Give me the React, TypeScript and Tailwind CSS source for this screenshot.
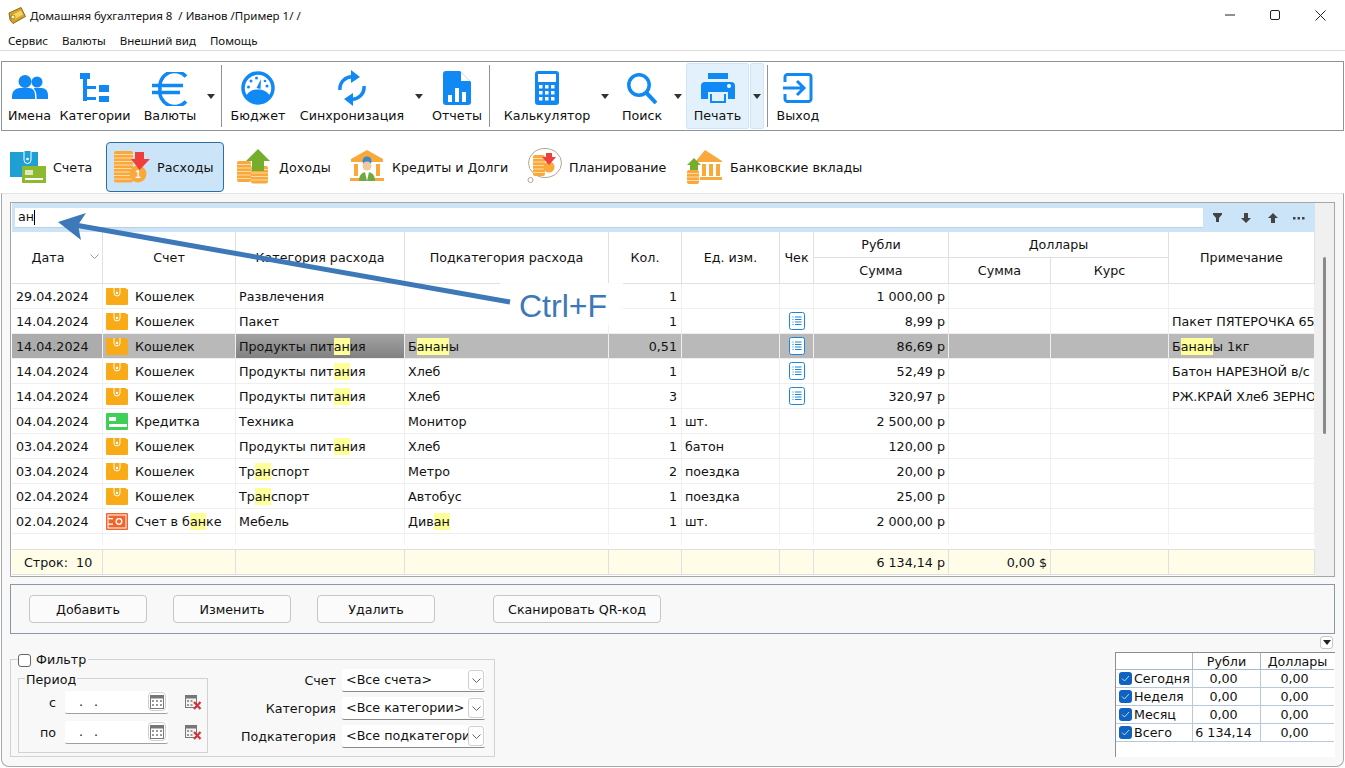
import React from "react";

const B = "#1089f5";
const cols = "grid grid-cols-[91px_133px_169px_204px_73px_98px_34px_135px_102px_118px_146px]";

function Hl({ t }: { t: string }) {
  const parts = t.split(/(ан)/g);
  const out: React.ReactNode[] = [];
  parts.forEach((p, i) => {
    if (p === "ан") out.push(<span key={i} className="bg-[#ffff99] inline-block leading-[17px]">{p}</span>);
    else if (p) out.push(<span key={i}>{p}</span>);
  });
  return <>{out}</>;
}

const IUsers = () => (
  <svg width="37" height="24" viewBox="0 0 37 24" fill={B} className="mb-[3px]">
    <circle cx="14" cy="6.500" r="6.500" /><circle cx="26" cy="7" r="5.500" />
    <path d="M1 24v-3c0-5 4-8 8-8h9c4 0 6 3 6 8v3z" />
    <path d="M25.500 24v-3c0-3-1-6-3-7.500 1-.5 2-.5 3-.5h5c4 0 6.500 3 6.500 7v4z" />
  </svg>
);
const ITree = () => (
  <svg width="30" height="30" viewBox="0 0 30 30" fill={B}>
    <rect x="0" y="0" width="10" height="6" /><rect x="3" y="6" width="4" height="22" />
    <rect x="3" y="13" width="13" height="3" /><rect x="3" y="24" width="13" height="3" />
    <rect x="19" y="12" width="10" height="7" /><rect x="19" y="23" width="10" height="6" />
  </svg>
);
const IEuro = () => (
  <svg width="36" height="34" viewBox="0 0 36 34" fill="none" stroke={B} strokeWidth="3.500" className="mt-[2px]">
    <path d="M34 4.500A15 15 0 0 0 8 17a15 15 0 0 0 26 12.500" />
    <path d="M0 13.500h31M0 20.500h28" />
  </svg>
);
const IGauge = () => (
  <svg width="34" height="34" viewBox="0 0 34 34">
    <circle cx="17" cy="17" r="15" fill="none" stroke={B} strokeWidth="3.500" />
    <path d="M5 25c3-5 7-6.500 12-6.500S26 20 29 25c-3 4-7 6-12 6S8 29 5 25z" fill={B} />
    <path d="M15.500 17L20 8l-.5 10z" fill={B} />
    <g fill={B}><circle cx="7.500" cy="16" r="1.500" /><circle cx="10" cy="10" r="1.500" /><circle cx="15.500" cy="7" r="1.500" /><circle cx="26" cy="15" r="1.500" /><circle cx="24" cy="10" r="1.300" /></g>
  </svg>
);
const ISync = () => (
  <svg width="28" height="36" viewBox="0 0 28 36" fill="none" stroke={B} strokeWidth="3.500">
    <path d="M2 20A12 12 0 0 1 16 7" /><path d="M26 16A12 12 0 0 1 12 29" />
    <path d="M13 0l9 7-9 6z" fill={B} stroke="none" /><path d="M15 23l-9 6 9 7z" fill={B} stroke="none" />
  </svg>
);
const IReport = () => (
  <svg width="28" height="34" viewBox="0 0 28 34">
    <path d="M3 0h14l11 11v20a3 3 0 0 1-3 3H3a3 3 0 0 1-3-3V3a3 3 0 0 1 3-3z" fill={B} />
    <path d="M18 1l9 9h-9z" fill="#fff" />
    <g fill="#fff"><rect x="5" y="24" width="4" height="7" /><rect x="12" y="17" width="4" height="14" /><rect x="19" y="21" width="4" height="10" /></g>
  </svg>
);
const ICalc = () => (
  <svg width="24" height="34" viewBox="0 0 24 34">
    <rect width="24" height="34" rx="3" fill={B} />
    <rect x="3" y="3" width="18" height="8" fill="#fff" />
    <g fill="#fff">
      <rect x="4" y="14" width="3.500" height="3.500" /><rect x="10" y="14" width="3.500" height="3.500" /><rect x="16" y="14" width="3.500" height="3.500" />
      <rect x="4" y="20" width="3.500" height="3.500" /><rect x="10" y="20" width="3.500" height="3.500" /><rect x="16" y="20" width="3.500" height="3.500" />
      <rect x="4" y="26" width="3.500" height="3.500" /><rect x="10" y="26" width="3.500" height="3.500" /><rect x="16" y="26" width="3.500" height="3.500" />
    </g>
  </svg>
);
const ISearch = () => (
  <svg width="30" height="31" viewBox="0 0 30 31" fill="none" stroke={B}>
    <circle cx="12" cy="12" r="10.200" strokeWidth="3.500" /><path d="M19.500 20l9.500 10" strokeWidth="4" />
  </svg>
);
const IPrint = () => (
  <svg width="34" height="30" viewBox="0 0 34 30">
    <rect x="7" y="0" width="20" height="6" fill={B} />
    <path d="M4 9h26a4 4 0 0 1 4 4v13h-7v-7H7v7H0V13a4 4 0 0 1 4-4z" fill={B} />
    <rect x="9" y="21" width="16" height="9" fill={B} /><rect x="11" y="21" width="12" height="7" fill="#e3f1fc" />
    <circle cx="28" cy="13" r="2" fill="#fff" />
  </svg>
);
const IExit = () => (
  <svg width="30" height="30" viewBox="0 0 30 30" fill="none" stroke={B} strokeWidth="3">
    <path d="M2 9V4a2.500 2.500 0 0 1 2.500-2.500h21A2.500 2.500 0 0 1 28 4v22a2.500 2.500 0 0 1-2.500 2.500h-21A2.500 2.500 0 0 1 2 26v-5" />
    <path d="M0 15h20M14 8l7 7-7 7" />
  </svg>
);
const Drop = () => (
  <svg width="8" height="5" viewBox="0 0 8 5" className="block"><path d="M0 0h8L4 5z" fill="#333" /></svg>
);

function Tool({ w, label, icon }: { w: string; label: string; icon: React.ReactNode }) {
  return (
    <div className={`${w} shrink-0 flex flex-col items-center pt-[8px]`}>
      <div className="h-[36px] flex items-center justify-center">{icon}</div>
      <div className="mt-[1px] leading-[17px] text-[12.7px] text-[#111] whitespace-nowrap">{label}</div>
    </div>
  );
}
const ArrowBtn = ({ c }: { c: string }) => <div className={`${c} w-[8px] shrink-0 pt-[32px]`}><Drop /></div>;
const Sep = ({ c }: { c: string }) => <div className={`${c} w-[1px] my-[3px] bg-[#8d959c] shrink-0`} />;

const Coins = ({ x, y, w, n }: { x: number; y: number; w: number; n: number }) => (
  <g>
    <rect x={x} y={y} width={w} height={n * 3.500} rx="2" fill="#f9a83c" />
    {Array.from({ length: n - 1 }, (_, i) => (
      <rect key={i} x={x} y={y + 3 + i * 3.500} width={w} height="1" fill="#ffdca8" />
    ))}
  </g>
);
const TAcc = () => (
  <svg width="36" height="32" viewBox="0 0 36 32">
    <path d="M0 1h28v25H0z" fill="#1ea0d5" />
    <path d="M14 0v9a3.500 3.500 0 0 0 7 0V0" fill="#1ea0d5" stroke="#fff" strokeWidth="1" />
    <circle cx="17.500" cy="8" r="1.300" fill="#fff" />
    <rect x="12" y="15" width="24" height="17" fill="#8db82f" />
    <rect x="15" y="19" width="8" height="5" fill="#fff" opacity=".7" /><rect x="15" y="27" width="18" height="2" fill="#fff" />
  </svg>
);
const TExp = () => (
  <svg width="36" height="32" viewBox="0 0 36 32">
    <Coins x={0} y={0} w={19} n={9} />
    <circle cx="24" cy="23" r="8.500" fill="#f9a83c" />
    <text x="24" y="27" fontSize="10" fill="#fff" textAnchor="middle" fontFamily="Liberation Sans, sans-serif" fontWeight="700">1</text>
    <path d="M21 1h9v7h6L25.500 19 17 8h4z" fill="#ef3e3e" />
  </svg>
);
const TInc = () => (
  <svg width="34" height="36" viewBox="0 0 34 36">
    <Coins x={0} y={12} w={14} n={6} /><Coins x={14} y={17} w={17} n={5} />
    <path d="M21 0l12 12h-6v10H15V12H9z" fill="#76ad2b" />
  </svg>
);
const TBank = () => (
  <svg width="36" height="34" viewBox="0 0 36 34">
    <path d="M18 0l16 9v3H2V9z" fill="#f9a83c" />
    <rect x="5" y="14" width="4" height="12" fill="#f9a83c" /><rect x="27" y="14" width="4" height="12" fill="#f9a83c" />
    <rect x="1" y="28" width="34" height="3" fill="#f9a83c" />
    <circle cx="18" cy="11" r="4.500" fill="#3a8bc8" /><circle cx="18" cy="16" r="4.500" fill="#efc9a0" />
    <path d="M10 31c0-6 3-9 8-9s8 3 8 9z" fill="#6fa942" /><path d="M16 22h4l-2 9z" fill="#fff" />
  </svg>
);
const TPlan = () => (
  <svg width="36" height="38" viewBox="0 0 36 38">
    <ellipse cx="19" cy="15" rx="16.500" ry="14.500" fill="#fff" stroke="#b5a68c" strokeWidth="1" />
    <circle cx="4.500" cy="32" r="2.500" fill="#fff" stroke="#b5a68c" />
    <Coins x={7} y={7} w={12} n={6} />
    <circle cx="23" cy="19" r="5.500" fill="#f9a83c" />
    <path d="M20 5h6v4h4l-7 8-7-8h4z" fill="#ef3e3e" />
  </svg>
);
const TDep = () => (
  <svg width="36" height="34" viewBox="0 0 36 34">
    <path d="M18 0L35 11v1H9v-1z" fill="#f9a83c" />
    <rect x="15" y="14" width="4" height="12" fill="#f9a83c" /><rect x="22" y="14" width="4" height="12" fill="#f9a83c" /><rect x="29" y="14" width="4" height="12" fill="#f9a83c" />
    <rect x="13" y="27" width="22" height="3" fill="#f9a83c" />
    <Coins x={0} y={20} w={12} n={4} />
    <path d="M7 8l7 7h-3v5H3v-5H0z" fill="#76ad2b" />
  </svg>
);

function Tab({ c, icon, label }: { c: string; icon: React.ReactNode; label: string }) {
  return (
    <div className={`${c} h-[50px] shrink-0 flex items-center`}>
      <div className="w-[36px] flex justify-center">{icon}</div>
      <span className="ml-[7px] pt-[1px] text-[12.7px] text-[#111] whitespace-nowrap">{label}</span>
    </div>
  );
}

const Wallet = () => (
  <svg width="22" height="17" viewBox="0 0 22 17" className="shrink-0 -mt-[1px]">
    <rect x="0" y="1" width="22" height="16" rx="1" fill="#f9ab17" />
    <rect x="0" y="0" width="20" height="1" fill="#f9ab17" />
    <path d="M8 0v5a3 3 0 0 0 6 0V0" fill="#f9ab17" stroke="#fff" strokeWidth="1" />
    <circle cx="11" cy="5" r="1.200" fill="#fff" />
  </svg>
);
const CardI = () => (
  <svg width="22" height="17" viewBox="0 0 22 17" className="shrink-0 -mt-[1px]">
    <rect width="22" height="17" rx="1" fill="#3ecf57" />
    <rect x="3" y="4" width="7" height="4" fill="#fff" /><rect x="3" y="11" width="18" height="3" fill="#fff" />
  </svg>
);
const BankI = () => (
  <svg width="22" height="17" viewBox="0 0 22 17" className="shrink-0 -mt-[1px]">
    <rect width="22" height="17" rx="1" fill="#f0652a" />
    <rect x="2" y="2" width="18" height="13" fill="none" stroke="#fff" strokeWidth="1" />
    <circle cx="13" cy="8.500" r="2.800" fill="none" stroke="#fff" strokeWidth="1.300" />
    <rect x="2" y="5" width="5" height="1.300" fill="#fff" /><rect x="2" y="10.500" width="5" height="1.300" fill="#fff" />
  </svg>
);
const Receipt = () => (
  <svg width="16" height="18" viewBox="0 0 16 18" fill="none" stroke="#1a86d9" className="-mt-[1px]">
    <rect x=".5" y=".5" width="15" height="17" rx="2" fill="#fff" />
    <path d="M6 5h6.500M6 7.500h6.500M6 10h6.500M6 12.500h6.500" /><path d="M3.500 5h1M3.500 7.500h1M3.500 10h1M3.500 12.500h1" />
  </svg>
);

type Row = { d: string; a: 0 | 1 | 2; an: string; c: string; s: string; q: string; u: string; r: boolean; sum: string; n: string; sel?: boolean };
const rows: Row[] = [
  { d: "29.04.2024", a: 0, an: "Кошелек", c: "Развлечения", s: "", q: "1", u: "", r: false, sum: "1 000,00 р", n: "" },
  { d: "14.04.2024", a: 0, an: "Кошелек", c: "Пакет", s: "", q: "1", u: "", r: true, sum: "8,99 р", n: "Пакет ПЯТЕРОЧКА 65" },
  { d: "14.04.2024", a: 0, an: "Кошелек", c: "Продукты питания", s: "Бананы", q: "0,51", u: "", r: true, sum: "86,69 р", n: "Бананы 1кг", sel: true },
  { d: "14.04.2024", a: 0, an: "Кошелек", c: "Продукты питания", s: "Хлеб", q: "1", u: "", r: true, sum: "52,49 р", n: "Батон НАРЕЗНОЙ в/с" },
  { d: "14.04.2024", a: 0, an: "Кошелек", c: "Продукты питания", s: "Хлеб", q: "3", u: "", r: true, sum: "320,97 р", n: "РЖ.КРАЙ Хлеб ЗЕРНО" },
  { d: "04.04.2024", a: 1, an: "Кредитка", c: "Техника", s: "Монитор", q: "1", u: "шт.", r: false, sum: "2 500,00 р", n: "" },
  { d: "03.04.2024", a: 0, an: "Кошелек", c: "Продукты питания", s: "Хлеб", q: "1", u: "батон", r: false, sum: "120,00 р", n: "" },
  { d: "03.04.2024", a: 0, an: "Кошелек", c: "Транспорт", s: "Метро", q: "2", u: "поездка", r: false, sum: "20,00 р", n: "" },
  { d: "02.04.2024", a: 0, an: "Кошелек", c: "Транспорт", s: "Автобус", q: "1", u: "поездка", r: false, sum: "25,00 р", n: "" },
  { d: "02.04.2024", a: 2, an: "Счет в банке", c: "Мебель", s: "Диван", q: "1", u: "шт.", r: false, sum: "2 000,00 р", n: "" },
];

const Hd = ({ c = "", t }: { c?: string; t: string }) => (
  <div className={`${c} flex items-center justify-center pt-[1px] border-r border-b border-[#e0e0e0] whitespace-nowrap`}>{t}</div>
);

function DataRow({ r }: { r: Row }) {
  const base = "h-[25px] pt-[1px] border-r border-b border-[#efefef] flex items-center overflow-hidden whitespace-nowrap";
  const sb = r.sel ? "bg-[#b9b9b9] border-[#d0d0d0]" : "";
  return (
    <div className={cols}>
      <div className={`${base} pl-[4px] ${r.sel ? "bg-[#acacac] border-[#d0d0d0]" : ""}`}>{r.d}</div>
      <div className={`${base} pl-[3px] ${sb}`}>
        {r.a === 0 ? <Wallet /> : r.a === 1 ? <CardI /> : <BankI />}
        <span className="ml-[7px]"><Hl t={r.an} /></span>
      </div>
      <div className={`${base} pl-[3px] ${r.sel ? "bg-gradient-to-b from-[#a2a2a2] to-[#828282] border-[#d0d0d0]" : ""}`}><span><Hl t={r.c} /></span></div>
      <div className={`${base} pl-[3px] ${sb}`}><span><Hl t={r.s} /></span></div>
      <div className={`${base} justify-end pr-[4px] ${sb}`}>{r.q}</div>
      <div className={`${base} pl-[3px] ${sb}`}>{r.u}</div>
      <div className={`${base} justify-center ${sb}`}>{r.r ? <Receipt /> : null}</div>
      <div className={`${base} justify-end pr-[3px] ${sb}`}>{r.sum}</div>
      <div className={`${base} ${sb}`} />
      <div className={`${base} ${sb}`} />
      <div className={`${base} pl-[3px] ${sb}`}><span><Hl t={r.n} /></span></div>
    </div>
  );
}

const Btn = ({ c, t }: { c: string; t: string }) => (
  <div className={`${c} h-[28px] pt-[1px] bg-[#fbfbfb] border border-[#c6c6c6] rounded-[4px] flex items-center justify-center shrink-0`}>{t}</div>
);

const Cal = () => (
  <svg width="14" height="15" viewBox="0 0 14 15">
    <rect x=".5" y="1.500" width="13" height="13" fill="#fff" stroke="#777" />
    <rect x="0" y="1" width="14" height="3.500" fill="#777" />
    <g fill="#999">
      <rect x="2" y="6" width="2" height="2" /><rect x="6" y="6" width="2" height="2" /><rect x="10" y="6" width="2" height="2" />
      <rect x="2" y="10" width="2" height="2" /><rect x="6" y="10" width="2" height="2" /><rect x="10" y="10" width="2" height="2" />
    </g>
  </svg>
);
const CalX = () => (
  <svg width="17" height="17" viewBox="0 0 17 17" className="shrink-0">
    <rect x=".5" y="1.500" width="11" height="12" fill="#f5f5f5" stroke="#777" />
    <rect x="0" y="1" width="12" height="3.500" fill="#777" />
    <g fill="#999"><rect x="2" y="6" width="2" height="2" /><rect x="5.500" y="6" width="2" height="2" /><rect x="2" y="10" width="2" height="2" /><rect x="5.500" y="10" width="2" height="2" /></g>
    <path d="M9 8l6.500 7M15.500 8L9 15" stroke="#d0343a" strokeWidth="2.200" />
  </svg>
);
const DateIn = () => (
  <div className="w-[103px] h-[23px] bg-white border-b border-[#a0a0a0] rounded-[2px] flex items-center relative shrink-0">
    <span className="ml-[14px] pt-[1px] leading-none">.</span>
    <span className="ml-[11px] pt-[1px] leading-none">.</span>
    <div className="absolute right-[2px] top-[1px] w-[18px] h-[19px] border border-[#cfcfcf] rounded-[4px] flex items-center justify-center"><Cal /></div>
  </div>
);
const Sel = ({ t }: { t: string }) => (
  <div className="w-[143px] h-[23px] bg-white border-b border-[#8a8a8a] rounded-[2px] flex items-center relative shrink-0 overflow-hidden">
    <span className="ml-[4px] whitespace-nowrap">{t}</span>
    <div className="absolute right-[1px] top-[1px] w-[16px] h-[20px] bg-white border border-[#cfcfcf] rounded-[3px] flex items-center justify-center">
      <svg width="9" height="5" viewBox="0 0 9 5" fill="none" stroke="#666"><path d="M.5.5l4 4 4-4" /></svg>
    </div>
  </div>
);
const Chk = () => (
  <div className="w-[13px] h-[13px] rounded-[3px] bg-[#0f62c0] flex items-center justify-center shrink-0 ml-[3px]">
    <svg width="9" height="7" viewBox="0 0 9 7" fill="none" stroke="#bcd6f2"><path d="M1 3.500l2.500 2.500L8 1" /></svg>
  </div>
);
const summary = [
  ["Сегодня", "0,00", "0,00"],
  ["Неделя", "0,00", "0,00"],
  ["Месяц", "0,00", "0,00"],
  ["Всего", "6 134,14", "0,00"],
];

export default function App() {
  return (
    <div className="w-[1345px] h-[768px] bg-white flex flex-col overflow-hidden relative font-['DejaVu_Sans',sans-serif] text-[12.7px] text-[#111]">
      {/* title */}
      <div className="h-[30px] shrink-0 flex items-center font-['Noto_Sans',sans-serif] text-[11.5px]">
        <svg width="18" height="17" viewBox="0 0 18 17" className="ml-[8px]">
          <path d="M1 6L13 0.500l4.500 9L5 16.500 2 13z" fill="#d9a520" stroke="#6b5310" strokeWidth=".8" />
          <path d="M4 8l9-4.500 2 4-9 5z" fill="#f3d467" />
          <circle cx="5" cy="10" r="2" fill="#fff2b0" stroke="#6b5310" strokeWidth=".6" />
        </svg>
        <span className="ml-[4px] pt-[1px] whitespace-pre">Домашняя бухгалтерия 8  / Иванов /Пример 1/ /</span>
        <div className="ml-auto mr-[2px] flex items-center">
          <div className="w-[45px] flex justify-center"><svg width="10" height="10"><path d="M0 5h10" stroke="#222" /></svg></div>
          <div className="w-[45px] flex justify-center"><svg width="10" height="10"><rect x=".5" y=".5" width="9" height="9" rx="1.500" fill="none" stroke="#222" /></svg></div>
          <div className="w-[46px] flex justify-center"><svg width="11" height="11"><path d="M.5.5l10 10M10.500.5l-10 10" stroke="#222" /></svg></div>
        </div>
      </div>
      {/* menu */}
      <div className="h-[21px] shrink-0 flex items-start pt-[2px] pl-[8px] gap-[14px] border-b border-[#dcdcdc] font-['Noto_Sans',sans-serif] text-[11.5px] leading-[17px]">
        <span>Сервис</span><span>Валюты</span><span>Внешний вид</span><span>Помощь</span>
      </div>
      {/* toolbar */}
      <div className="mt-[10px] mx-[1px] h-[70px] shrink-0 border border-[#8d959c] flex">
        <Tool w="w-[55px]" label="Имена" icon={<IUsers />} />
        <Tool w="w-[76px]" label="Категории" icon={<ITree />} />
        <Tool w="w-[74px]" label="Валюты" icon={<IEuro />} />
        <ArrowBtn c="" />
        <Sep c="ml-[6px]" />
        <Tool w="w-[72px]" label="Бюджет" icon={<IGauge />} />
        <Tool w="w-[116px]" label="Синхронизация" icon={<ISync />} />
        <ArrowBtn c="ml-[5px] mr-[5px]" />
        <Tool w="w-[58px]" label="Отчеты" icon={<IReport />} />
        <Sep c="ml-[3px]" />
        <Tool w="w-[114px]" label="Калькулятор" icon={<ICalc />} />
        <ArrowBtn c="ml-[-3px]" />
        <Tool w="w-[66px]" label="Поиск" icon={<ISearch />} />
        <ArrowBtn c="ml-[-1px]" />
        <div className="ml-[4px] w-[63px] my-[1px] bg-[#e3f1fc] border border-[#cfe6f9] rounded-[2px] shrink-0">
          <Tool w="w-full -mt-[2px]" label="Печать" icon={<IPrint />} />
        </div>
        <div className="ml-[1px] w-[14px] my-[1px] bg-[#e3f1fc] border border-[#cfe6f9] rounded-[2px] pt-[30px] pl-[2px] shrink-0"><Drop /></div>
        <Sep c="ml-[3px]" />
        <Tool w="w-[60px]" label="Выход" icon={<IExit />} />
      </div>
      {/* tabs */}
      <div className="h-[62px] shrink-0 flex items-start pt-[11px]">
        <Tab c="w-[96px] ml-[10px]" icon={<TAcc />} label="Счета" />
        <Tab c="w-[118px] pl-[7px] bg-[#cce4f7] border border-[#2a6ea6] rounded-[4px]" icon={<TExp />} label="Расходы" />
        <Tab c="w-[113px] ml-[12px]" icon={<TInc />} label="Доходы" />
        <Tab c="w-[177px]" icon={<TBank />} label="Кредиты и Долги" />
        <Tab c="w-[161px]" icon={<TPlan />} label="Планирование" />
        <Tab c="" icon={<TDep />} label="Банковские вклады" />
      </div>
      {/* gray client area */}
      <div className="flex-1 mx-[1px] mb-[1px] bg-[#f8f8f8] border border-[#a8a8a8] border-t-[#e4e4e4] rounded-b-[8px] px-[8px] pt-[8px] flex flex-col min-h-0">
        {/* grid panel */}
        <div className="h-[375px] shrink-0 border border-[#a6a6a6] flex bg-white">
          <div className="w-[1303px] ml-[1px] shrink-0 flex flex-col">
            <div className="h-[29px] shrink-0 bg-[#cce4f7] flex items-center pl-[3px]">
              <div className="w-[1188px] h-[20px] bg-white border-b border-[#bcd0e0] flex items-center pl-[3px]">
                ан<span className="w-px h-[15px] bg-black" />
              </div>
              <svg width="12" height="10" viewBox="0 0 12 10" className="ml-[9px]"><path d="M1 0h9v1.500L7 5v4H4V5L1 1.500z" fill="#444" /></svg>
              <svg width="10" height="10" viewBox="0 0 10 10" className="ml-[17px]"><path d="M3 0h4v5h3L5 10 0 5h3z" fill="#444" /></svg>
              <svg width="10" height="10" viewBox="0 0 10 10" className="ml-[17px]"><path d="M3 10h4V5h3L5 0 0 5h3z" fill="#444" /></svg>
              <svg width="12" height="4" viewBox="0 0 12 4" className="ml-[15px]" fill="#444"><rect y="1" width="2.500" height="2.500" /><rect x="4.500" y="1" width="2.500" height="2.500" /><rect x="9" y="1" width="2.500" height="2.500" /></svg>
            </div>
            <div className={`${cols} grid-rows-[26px_26px] shrink-0 relative`}>
              <div className="row-span-2 flex items-center justify-center pr-[18px] pt-[1px] border-r border-b border-[#e0e0e0] relative">
                Дата
                <svg width="9" height="5" viewBox="0 0 9 5" fill="none" stroke="#999" className="absolute right-[3px] top-[22px]"><path d="M.5.500l4 4 4-4" /></svg>
              </div>
              <Hd c="row-span-2" t="Счет" />
              <Hd c="row-span-2" t="Категория расхода" />
              <Hd c="row-span-2" t="Подкатегория расхода" />
              <Hd c="row-span-2" t="Кол." />
              <Hd c="row-span-2" t="Ед. изм." />
              <Hd c="row-span-2" t="Чек" />
              <Hd t="Рубли" />
              <Hd c="col-span-2" t="Доллары" />
              <Hd c="row-span-2" t="Примечание" />
              <Hd t="Сумма" />
              <Hd t="Сумма" />
              <Hd t="Курс" />
            </div>
            {rows.map((r, i) => <DataRow key={i} r={r} />)}
            <div className={`${cols} h-[11px] shrink-0`}>
              {Array.from({ length: 11 }, (_, i) => <div key={i} className="border-r border-[#f3f3f3]" />)}
            </div>
            <div className="h-[4px] shrink-0" />
            <div className={`${cols} h-[26px] shrink-0 bg-[#fffde8] border-t border-[#e0e0e0] border-b border-b-[#dedede]`}>
              <div className="border-r border-[#e0e0e0] flex items-center pl-[12px] whitespace-pre pt-[1px]">Строк:  10</div>
              {["", "", "", "", "", ""].map((_, i) => <div key={i} className="border-r border-[#e0e0e0]" />)}
              <div className="border-r border-[#e0e0e0] flex items-center justify-end pr-[3px] pt-[1px]">6 134,14 р</div>
              <div className="border-r border-[#e0e0e0] flex items-center justify-end pr-[3px] pt-[1px]">0,00 $</div>
              <div className="border-r border-[#e0e0e0]" />
              <div className="border-r border-[#e0e0e0]" />
            </div>
          </div>
          <div className="flex-1 bg-[#f0f0f0] flex justify-center">
            <div className="w-[3px] h-[177px] mt-[54px] bg-[#8a8a8a] rounded-full" />
          </div>
        </div>
        {/* action panel */}
        <div className="mt-[7px] h-[50px] shrink-0 border border-[#8a98a6] flex items-center pl-[18px]">
          <Btn c="w-[118px]" t="Добавить" />
          <Btn c="w-[118px] ml-[26px]" t="Изменить" />
          <Btn c="w-[118px] ml-[26px]" t="Удалить" />
          <Btn c="w-[168px] ml-[58px]" t="Сканировать QR-код" />
        </div>
        {/* bottom */}
        <div className="flex-1 flex justify-between items-start min-h-0">
          <div className="mt-[25px] w-[485px] h-[98px] border border-[#d2d2d2] relative flex items-start pt-[9px] pl-[7px]">
            <div className="absolute left-[7px] top-[-7px] bg-[#f8f8f8] flex items-center pr-[2px] h-[14px]">
              <div className="w-[13px] h-[13px] border border-[#666] rounded-[3px] bg-white" />
              <span className="ml-[5px]">Фильтр</span>
            </div>
            <div className="mt-[9px] w-[190px] h-[75px] border border-[#d2d2d2] relative pt-[12px] shrink-0">
              <span className="absolute left-[6px] top-[-7px] bg-[#f8f8f8] px-[1px] leading-[15px]">Период</span>
              <div className="flex items-center">
                <span className="w-[37px] text-right">с</span>
                <div className="ml-[9px]"><DateIn /></div>
                <div className="ml-[17px]"><CalX /></div>
              </div>
              <div className="flex items-center mt-[7px]">
                <span className="w-[37px] text-right">по</span>
                <div className="ml-[9px]"><DateIn /></div>
                <div className="ml-[17px]"><CalX /></div>
              </div>
            </div>
            <div className="flex flex-col gap-[5px] shrink-0">
              {[["Счет", "<Все счета>"], ["Категория", "<Все категории>"], ["Подкатегория", "<Все подкатегори"]].map(([l, v]) => (
                <div key={l} className="flex items-center">
                  <span className="w-[128px] pt-[1px] text-right whitespace-nowrap">{l}</span>
                  <div className="ml-[6px]"><Sel t={v} /></div>
                </div>
              ))}
            </div>
          </div>
          <div className="flex flex-col items-end mt-[2px]">
            <div className="w-[13px] h-[13px] mr-[2px] border border-[#c8c8c8] rounded-[3px] bg-white flex items-center justify-center">
              <svg width="8" height="5" viewBox="0 0 8 5"><path d="M0 0h8L4 5z" fill="#222" /></svg>
            </div>
            <div className="mt-[3px] w-[220px] h-[105px] border-l border-t border-[#8a8f96] bg-white">
              <div className="grid grid-cols-[77px_68px_73px] leading-[17px]">
                <div className="h-[17px] border-r border-b border-[#a9b9cc]" />
                <div className="h-[17px] border-r border-b border-[#a9b9cc] text-center">Рубли</div>
                <div className="h-[17px] border-b border-[#a9b9cc] text-center">Доллары</div>
                {summary.map((s) => (
                  <React.Fragment key={s[0]}>
                    <div className="h-[18px] border-r border-b border-[#b8c8dc] flex items-center">
                      <Chk /><span className="ml-[2px]">{s[0]}</span>
                    </div>
                    <div className="h-[18px] border-r border-b border-[#b8c8dc] text-center pr-[6px] leading-[17px] whitespace-nowrap">{s[1]}</div>
                    <div className="h-[18px] border-b border-[#b8c8dc] text-center pr-[6px] leading-[17px]">{s[2]}</div>
                  </React.Fragment>
                ))}
              </div>
            </div>
          </div>
        </div>
      </div>
      {/* overlay annotation */}
      <div className="absolute left-[500px] top-[283px] w-[123px] h-[42px] pt-[4px] bg-white/90 flex items-center justify-end pr-[16px] font-['Liberation_Sans',sans-serif] text-[32px] text-[#3d78b9] leading-none">Ctrl+F</div>
      <svg width="520" height="120" viewBox="0 0 520 120" className="absolute left-[40px] top-[205px] pointer-events-none">
        <path d="M35 20L470 97" stroke="#3d78b9" strokeWidth="5" fill="none" />
        <path d="M18 17L46 8 38 20 41 35z" fill="#3d78b9" />
      </svg>
    </div>
  );
}
